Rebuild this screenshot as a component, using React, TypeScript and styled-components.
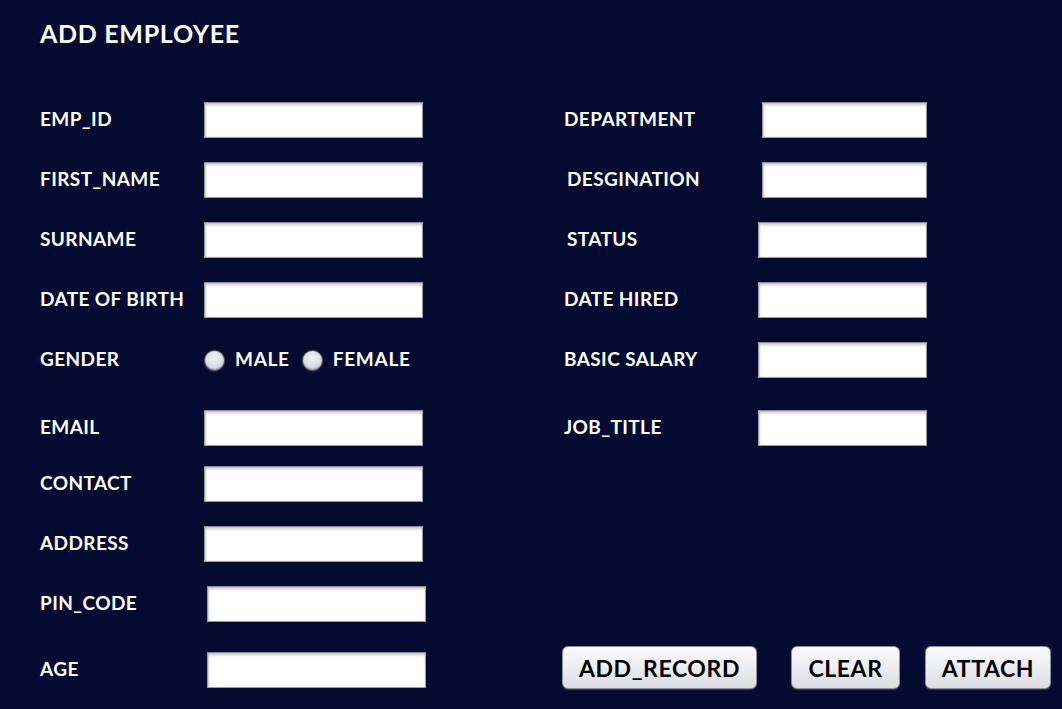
import React from "react";
import styled, { createGlobalStyle } from "styled-components";

const Global = createGlobalStyle`
  html, body { margin: 0; padding: 0; background: #050a30; }
  body { font-family: Lato, "Liberation Sans", sans-serif; }
`;

const Page = styled.div`
  width: 1062px;
  height: 709px;
  background: #050a30;
  box-sizing: border-box;
  padding: 19px 0 0 40px;
  color: #ffffff;
  overflow: hidden;
`;

const Title = styled.h1`
  margin: 0;
  font-size: 25px;
  font-weight: 700;
  letter-spacing: 0.7px;
  line-height: 28px;
`;

const Columns = styled.div`
  display: flex;
  margin-top: 55px;
`;

const Column = styled.div<{ $width: number }>`
  display: flex;
  flex-direction: column;
  width: ${(p) => p.$width}px;
`;

const Row = styled.div<{ $top: number }>`
  display: flex;
  align-items: center;
  height: 36px;
  margin-top: ${(p) => p.$top}px;
`;

const Label = styled.span<{ $width: number; $shift?: number }>`
  width: ${(p) => p.$width}px;
  padding-left: ${(p) => p.$shift || 0}px;
  box-sizing: border-box;
  font-size: 19px;
  font-weight: 700;
  letter-spacing: 0.4px;
  white-space: nowrap;
  flex-shrink: 0;
  margin-top: -3px;
`;

const Field = styled.input<{ $width: number; $shift?: number }>`
  width: ${(p) => p.$width}px;
  height: 36px;
  margin-left: ${(p) => p.$shift || 0}px;
  box-sizing: border-box;
  border: 1px solid #9a9aa2;
  border-top-color: #8a8a92;
  background: #ffffff;
  box-shadow: inset 0 3px 3px -1px #c4c4c8, inset 2px 0 2px -1px #d0d0d4;
  outline: none;
  padding: 0 6px;
  font-size: 16px;
`;

const RadioGroup = styled.div`
  display: flex;
  align-items: center;
`;

const RadioDot = styled.span`
  width: 21px;
  height: 21px;
  border-radius: 50%;
  box-sizing: border-box;
  background: radial-gradient(circle at 50% 35%, #f2f3f7 0%, #d9dbe2 60%, #b9bcc6 100%);
  border: 1px solid #5e6068;
  box-shadow: 0 1px 1px #2a2c36, inset 0 -1px 1px #9ea0aa;
  margin-right: 10px;
`;

const RadioText = styled.span<{ $gap: number }>`
  font-size: 19px;
  font-weight: 700;
  letter-spacing: 0.7px;
  margin-right: ${(p) => p.$gap}px;
  margin-top: -3px;
`;

const Buttons = styled.div`
  display: flex;
  align-items: center;
  margin-top: 200px;
  margin-left: -2px;
`;

const Button = styled.button<{ $width: number; $gap: number }>`
  width: ${(p) => p.$width}px;
  height: 43px;
  margin-right: ${(p) => p.$gap}px;
  border: 1px solid #8e9098;
  border-radius: 6px;
  background: linear-gradient(#fbfbfd 0%, #eceef2 45%, #dcdee4 100%);
  box-shadow: 0 1px 1px #3a3c48;
  font-family: Lato, "Liberation Sans", sans-serif;
  font-size: 23px;
  font-weight: 700;
  letter-spacing: 0.6px;
  color: #000;
  padding: 0;
  cursor: pointer;
`;

type Item = { label: string; top: number; shift?: number; labelShift?: number };

const leftItems: Item[] = [
  { label: "EMP_ID", top: 0 },
  { label: "FIRST_NAME", top: 24 },
  { label: "SURNAME", top: 24 },
  { label: "DATE OF BIRTH", top: 24 },
];

const leftLower: Item[] = [
  { label: "EMAIL", top: 32 },
  { label: "CONTACT", top: 20 },
  { label: "ADDRESS", top: 24 },
  { label: "PIN_CODE", top: 24, shift: 3 },
  { label: "AGE", top: 30, shift: 3 },
];

const rightItems: (Item & { w: number })[] = [
  { label: "DEPARTMENT", top: 0, shift: 4, w: 165 },
  { label: "DESGINATION", top: 24, shift: 4, labelShift: 3, w: 165 },
  { label: "STATUS", top: 24, w: 169, labelShift: 3 },
  { label: "DATE HIRED", top: 24, w: 169 },
  { label: "BASIC SALARY", top: 24, w: 169 },
  { label: "JOB_TITLE", top: 32, w: 169 },
];

export default function App() {
  return (
    <>
      <Global />
      <Page>
        <Title>ADD EMPLOYEE</Title>
        <Columns>
          <Column $width={524}>
            {leftItems.map((it) => (
              <Row key={it.label} $top={it.top}>
                <Label $width={164}>{it.label}</Label>
                <Field $width={219} $shift={it.shift} />
              </Row>
            ))}
            <Row $top={24}>
              <Label $width={164}>GENDER</Label>
              <RadioGroup>
                <RadioDot />
                <RadioText $gap={12}>MALE</RadioText>
                <RadioDot />
                <RadioText $gap={0}>FEMALE</RadioText>
              </RadioGroup>
            </Row>
            {leftLower.map((it) => (
              <Row key={it.label} $top={it.top}>
                <Label $width={164}>{it.label}</Label>
                <Field $width={219} $shift={it.shift} />
              </Row>
            ))}
          </Column>
          <Column $width={498}>
            {rightItems.map((it) => (
              <Row key={it.label} $top={it.top}>
                <Label $width={194} $shift={it.labelShift}>{it.label}</Label>
                <Field $width={it.w} $shift={it.shift} />
              </Row>
            ))}
            <Buttons>
              <Button $width={195} $gap={34}>ADD_RECORD</Button>
              <Button $width={109} $gap={25}>CLEAR</Button>
              <Button $width={126} $gap={0}>ATTACH</Button>
            </Buttons>
          </Column>
        </Columns>
      </Page>
    </>
  );
}
